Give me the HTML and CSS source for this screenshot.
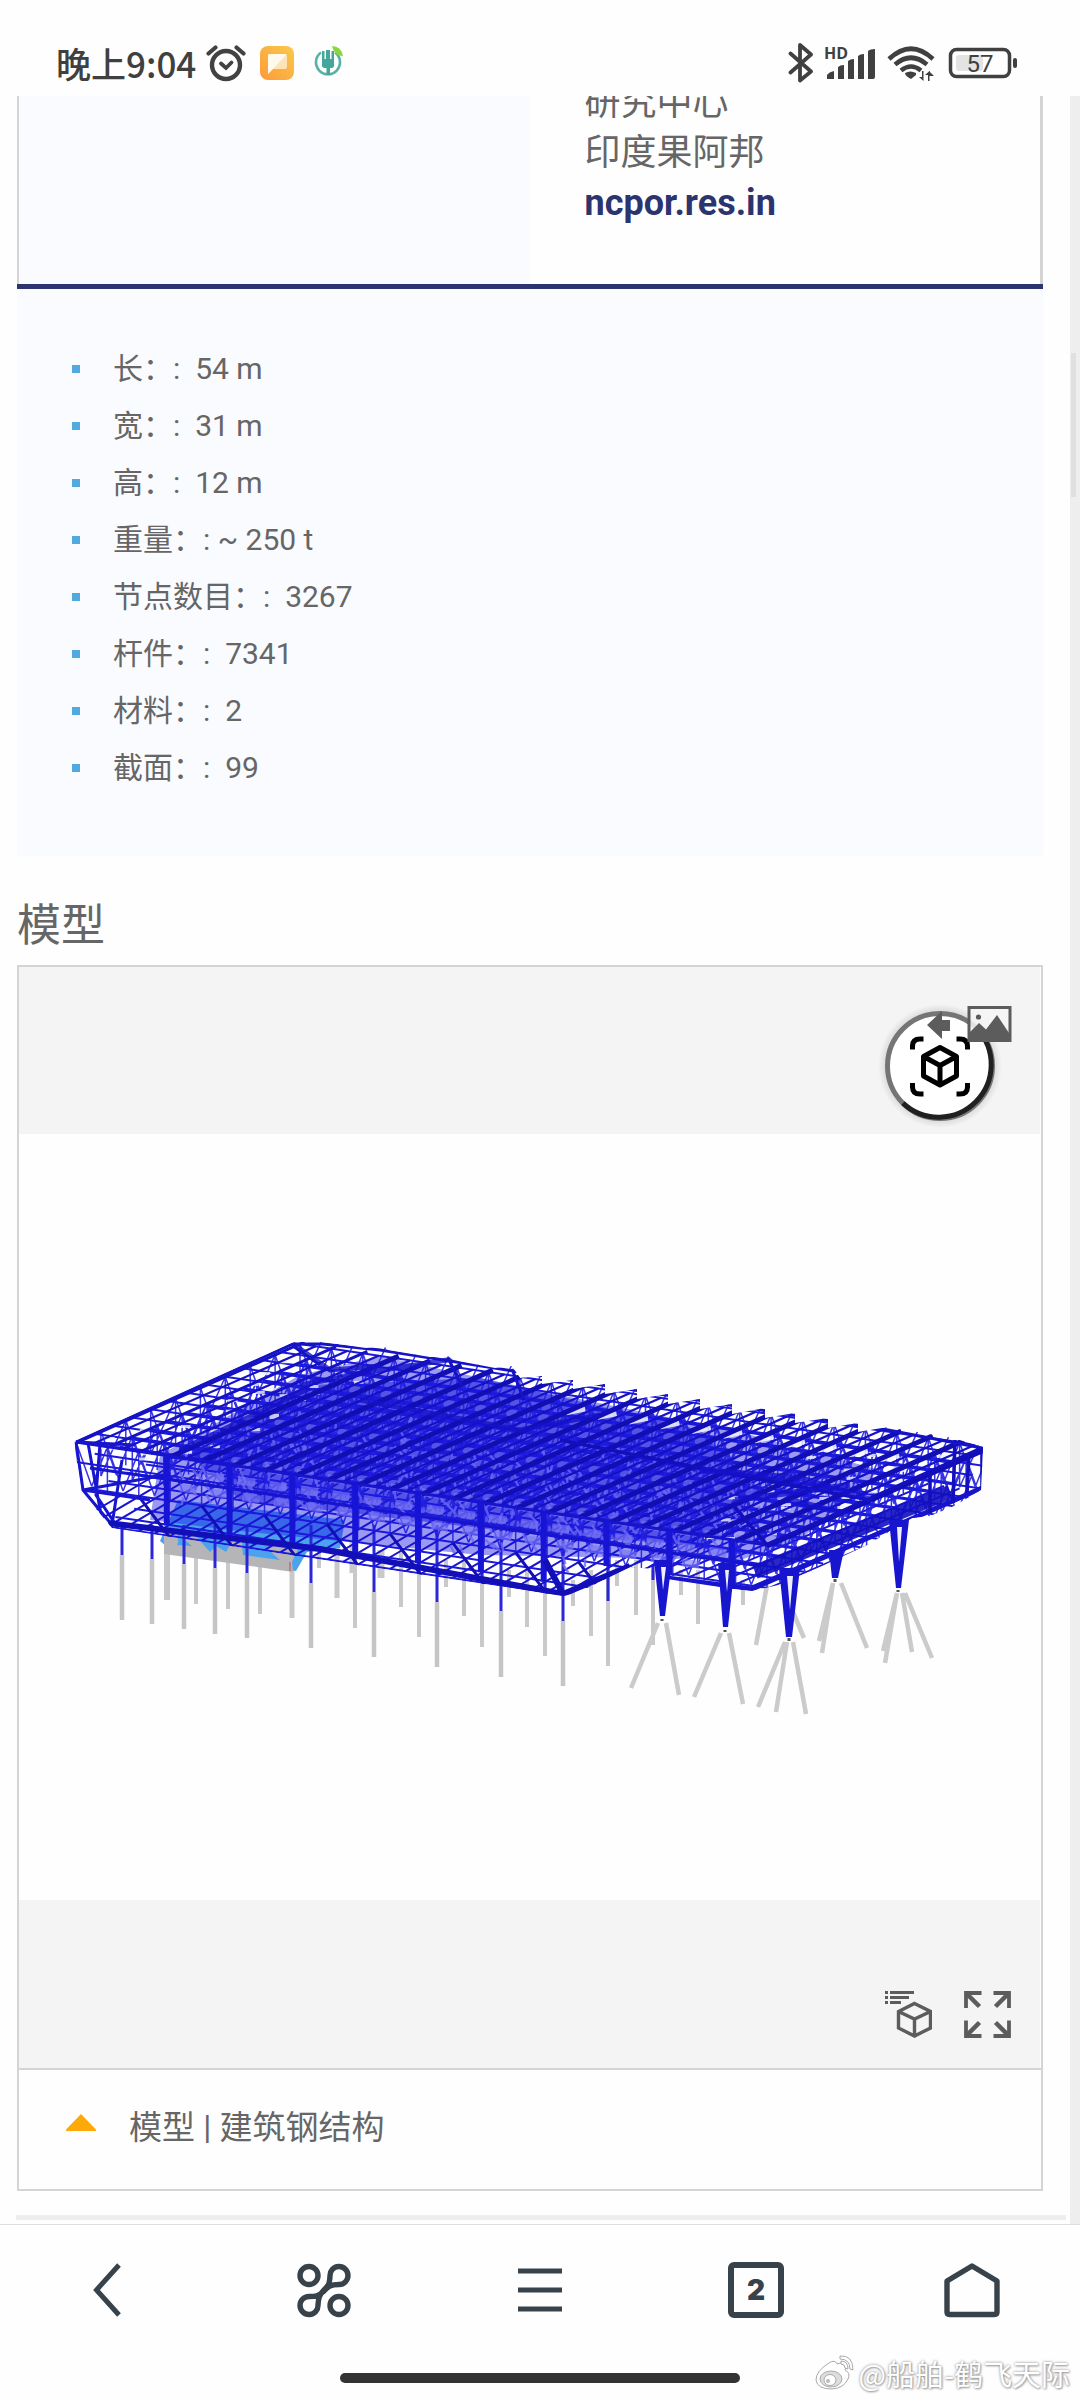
FILE: index.html
```html
<!DOCTYPE html>
<html lang="zh-CN">
<head>
<meta charset="utf-8">
<meta name="viewport" content="width=device-width, initial-scale=1">
<title>模型 | 建筑钢结构</title>
<link rel="stylesheet" href="styles.css">
</head>
<body>
<header class="status">
  <span class="status-time">晚上9:04</span>
  <svg class="status-alarm" viewBox="0 0 40 38" width="40" height="38" aria-hidden="true">
    <g fill="none" stroke="#424242" stroke-linecap="round">
      <circle cx="20" cy="21" r="14" stroke-width="4.4"/>
      <path d="M2.5 9.5 9.5 3.5M30.500 3.500 37.500 9.500" stroke-width="4.200"/>
      <path d="M15 19.500 20 24 25.500 18.500" stroke-width="3.800"/>
    </g>
  </svg>
  <svg class="status-chat" viewBox="0 0 34 34" width="34" height="34" aria-hidden="true">
    <defs><linearGradient id="amber" x1="1" y1="0" x2="0" y2="1"><stop offset="0" stop-color="#fbc94c"/><stop offset="1" stop-color="#fb9a3a"/></linearGradient></defs>
    <rect width="34" height="34" rx="8" fill="url(#amber)"/>
    <path d="M8 9.500Q8 8 9.500 8H25q2 0 2 2V21q0 2-2 2H13L8 28Z" fill="#fde3b6"/>
    <path d="M8 9.500Q8 8 9.500 8H25q1 0 1.500.8L8 28Z" fill="#fff8ec"/>
  </svg>
  <svg class="status-leaf" viewBox="0 0 32 34" width="32" height="34" aria-hidden="true">
    <path d="M9 6.500A12 12 0 1 0 23 6.500" fill="none" stroke="#55b3a6" stroke-width="2.600"/>
    <path d="M10 5h2.500v8h1.500V4h4v9h1.500V5h2.500v15q0 2-4 2v7h-3.500v-7q-4.500 0-4.500-2Z" fill="#45a79c"/>
    <path d="M20 0q9 0 11 10-9 0-11-10Z" fill="#8bd63f"/>
  </svg>
  <span class="spacer"></span>
  <svg class="status-system" viewBox="788 40 230 46" width="230" height="46" role="img" aria-label="蓝牙、信号、无线网络、电量">
    <g fill="none" stroke="#404040" stroke-width="3.800" stroke-linejoin="round" stroke-linecap="round">
      <path d="M790.500 53.500 811 71.500 800 80.500V45L811 54.500 790.500 72.500"/>
    </g>
    <g fill="#404040">
      <path d="M827 79V75q2-3 7-4v8ZM838 79V67q2-2 6-2v14ZM848 79V61q2-2 6-2v20ZM858 79V56q2-2 6-2v25ZM868 79V51q2-2 7-2v28q0 2-2 2Z"/>
      <text x="824" y="59" class="hd-text">HD</text>
      <path d="M905 73Q910.500 70 916 73V75L911 79Q905 76 905 73Z"/>
      <path d="M922 71v6h-3l4.500 4v-10ZM928 81v-6h-3l4.500-4v10ZM929 71l5 5h-5Z"/>
    </g>
    <g fill="none" stroke="#404040" stroke-width="4.600">
      <path d="M889 59Q911 38.500 933 59M895 64.500Q911 51 927 64.500M901 70.500Q911 62.500 921 70.500"/>
    </g>
    <rect x="956" y="55" width="27" height="16" rx="3" fill="#e3e3e3"/>
    <rect x="950.500" y="49.500" width="59" height="27" rx="6" fill="none" stroke="#404040" stroke-width="3.500"/>
    <rect x="1013" y="58" width="4" height="10" rx="2" fill="#404040"/>
    <text x="980" y="71.500" class="battery-text" text-anchor="middle">57</text>
  </svg>
</header>

<div class="viewport">
  <main class="page">
    <section class="partner">
      <div class="partner-logo"></div>
      <address class="partner-text">研究中心<br>印度果阿邦<br><a href="#">ncpor.res.in</a></address>
    </section>
    <ul class="facts">
      <li>长：:&nbsp; 54 m</li>
      <li>宽：:&nbsp; 31 m</li>
      <li>高：:&nbsp; 12 m</li>
      <li>重量：: ~ 250 t</li>
      <li>节点数目：:&nbsp; 3267</li>
      <li>杆件：:&nbsp; 7341</li>
      <li>材料：:&nbsp; 2</li>
      <li>截面：:&nbsp; 99</li>
    </ul>
    <h2 class="title">模型</h2>
    <section class="model">
      <div class="model-band model-band-top"></div>
      <svg id="structure" class="model-view" viewBox="19 1134 1022 766" role="img" aria-label="钢结构模型"></svg>
      <div class="model-band model-tools">
        <button type="button" aria-label="模型结构">
          <svg viewBox="0 0 47 47" width="47" height="47"><path d="M0 0h3v3H0ZM5 0h24v3H5ZM0 5h3v3H0ZM5 5h19v3H5ZM0 10h3v3H0ZM5 10h11v3H5Z" fill="#5c5c5c"/><path d="M29.500 12.500 45.500 20.500V37L29.500 45 13.500 37V20.500ZM13.500 20.500 29.500 28 45.500 20.500M29.500 28V45" fill="none" stroke="#5c5c5c" stroke-width="3.400"/></svg>
        </button>
        <button type="button" aria-label="全屏">
          <svg viewBox="0 0 47 47" width="47" height="47"><g fill="none" stroke="#5c5c5c" stroke-width="3.800"><path d="M17.500 2H2V17M29.500 2H45V17M2 29.500V45H17.500M45 29.500V45H29.500"/><path d="M2 2 15.500 15.500M45 2 31.500 15.500M2 45 15.500 31.500M45 45 31.500 31.500" stroke-width="4.500"/></g></svg>
        </button>
      </div>
      <div class="model-switch">
        <button class="ar-button" type="button" aria-label="增强现实">
          <svg viewBox="-62 -62 124 124" width="124" height="124">
            <circle r="52.500" fill="#fff" stroke="#757575" stroke-width="5"/>
            <path d="M-37.100 37.100A52.500 52.500 0 0 0 37.100-37.100" fill="none" stroke="#202020" stroke-width="5"/>
            <g fill="none" stroke="#000" stroke-width="5" stroke-linejoin="round">
              <path d="M-16.500-27H-20Q-27.500-27-27.500-20V-16.500M16.500-27H20Q27.500-27 27.500-20V-16.500M-16.500 28H-20Q-27.500 28-27.500 21V17M16.500 28H20Q27.500 28 27.500 21V17"/>
              <path d="M0-18.500 16.500-9.500V10L0 19-16.500 10V-9.500ZM-16.500-9.500 0-.5 16.500-9.500M0-.5V19"/>
            </g>
          </svg>
        </button>
        <button class="image-button" type="button" aria-label="返回图片">
          <svg viewBox="0 0 86 38" width="86" height="38"><path d="M1 19 16 5V14H24V25H16V33Z" fill="#5c5c5c"/><rect x="43" y="1.500" width="41" height="33" fill="#f4f4f4" fill-opacity=".85" stroke="#5c5c5c" stroke-width="3"/><circle cx="52.500" cy="11" r="2.600" fill="#5c5c5c"/><path d="M43 27 53 17 60 23.500 71 9 85 30V36H43Z" fill="#5c5c5c"/></svg>
        </button>
      </div>
      <button class="caption" type="button">
        <svg viewBox="0 0 30 17" width="30" height="17" aria-hidden="true"><path d="M15 0 30 15.500V17H0V15.500Z" fill="#fda90a"/></svg>
        <span>模型 | 建筑钢结构</span>
      </button>
    </section>
    <hr class="divider">
  </main>
  <div class="scroll-track"><div class="scroll-thumb"></div></div>
</div>

<nav class="browser-bar">
  <div class="browser-buttons">
    <button type="button" aria-label="后退"><svg viewBox="0 0 56 56" width="56" height="56"><path d="M39 3 16.500 28 39 53" fill="none" stroke="#37424a" stroke-width="5"/></svg></button>
    <button type="button" aria-label="应用"><svg viewBox="0 0 56 56" width="56" height="56"><g fill="none" stroke="#37424a" stroke-width="5.400"><circle cx="13" cy="13.500" r="9"/><circle cx="43" cy="43.500" r="9"/><path d="M34 14A9 9 0 1 1 43 22.500C35 22.500 32 24 27 30 22 34 20 34.500 13 34.500A9 9 0 1 0 22 43C22.500 36 23 33 28 28 33 23 33.500 22 34 14Z"/></g></svg></button>
    <button type="button" aria-label="菜单"><svg viewBox="0 0 56 56" width="56" height="56"><path d="M6 9H50M6 28H50M6 47H50" stroke="#37424a" stroke-width="5.200"/></svg></button>
    <button class="tabs" type="button" aria-label="标签页">2</button>
    <button type="button" aria-label="主页"><svg viewBox="0 0 56 56" width="56" height="56"><path d="M28 4 53 19V50Q53 52.500 50.500 52.500H5.500Q3 52.500 3 50V19Z" fill="none" stroke="#37424a" stroke-width="5.400" stroke-linejoin="round"/></svg></button>
  </div>
  <div class="home-pill"></div>
  <div class="watermark">
    <svg viewBox="0 0 40 38" width="40" height="38" aria-hidden="true"><g fill="#fff" stroke="#aaa" stroke-width="1"><path d="M14 9q6-4 8 1 8-3 9 2 0 2-1 4 6 3 3 9-4 9-16 10Q2 35 1 26 1 17 14 9Z"/><ellipse cx="16" cy="25" rx="11" ry="8" fill="#ddd"/><ellipse cx="15" cy="26" rx="6" ry="5.500"/><path d="M25 2q13-1 13 14l-3-1Q35 5 25 5ZM26 7q7 0 7 8l-3-1q0-4-4-4Z"/></g><circle cx="13" cy="27" r="2" fill="#bbb"/></svg>
    <span>@船舶-鹤飞天际</span>
  </div>
</nav>
<script src="structure.js"></script>
</body>
</html>
```
FILE: styles.css
```css
* { box-sizing: border-box; }

body {
  margin: 0;
  min-height: 100vh;
  display: flex;
  flex-direction: column;
  background: #fefefe;
  color: #666;
  font-family: Roboto, "Noto Sans CJK SC", sans-serif;
}

button {
  margin: 0;
  padding: 0;
  border: 0;
  background: none;
  color: inherit;
  font: inherit;
  cursor: pointer;
}

svg { display: block; }

/* Phone status bar */
.status {
  display: flex;
  align-items: center;
  height: 96px;
  padding: 30px 62px 0 56px;
}
.status-time {
  font: 500 35px/40px "Noto Sans CJK SC", sans-serif;
  color: #404040;
}
.status-alarm { margin-left: 10px; }
.status-chat { margin-left: 14px; }
.status-leaf { margin-left: 18px; }
.spacer { flex: 1; }
.hd-text { font: 700 16px "Open Sans", sans-serif; }
.battery-text { font: 400 24px Roboto, sans-serif; fill: #404040; }

/* Scrolled web page */
.viewport {
  flex: 1;
  display: flex;
  border-bottom: 1px solid #ddd;
}
.page {
  flex: 1;
  min-width: 0;
  padding: 0 27px 4px 17px;
}
.scroll-track {
  width: 10px;
  padding-top: 257px;
  background: #eee;
}
.scroll-thumb {
  width: 5px;
  height: 144px;
  margin-left: 1px;
  background: #e0e0e0;
}

.partner {
  display: grid;
  grid-template: 188px / 1fr 1fr;
  align-items: end;
  overflow: hidden;
  border: solid #d4d4d4;
  border-width: 0 3px 0 2px;
}
.partner-logo {
  height: 100%;
  background: #fafbff;
}
.partner-text {
  padding: 0 0 56px 55px;
  font-size: 36px;
  line-height: 50px;
  font-style: normal;
}
.partner-text a {
  color: #2c3470;
  font-weight: 700;
  text-decoration: none;
}

.facts {
  margin: 0;
  padding: 51px 55px 60px;
  border-top: 5px solid #2c3470;
  background: #fafbff;
  list-style: none;
  font-size: 30px;
  line-height: 57px;
}
.facts li {
  display: flex;
  align-items: center;
  gap: 33px;
  white-space: pre;
}
.facts li::before {
  content: "";
  width: 8px;
  height: 8px;
  background: #51a9df;
}

.title {
  margin: 38px 0 7px;
  font-size: 44px;
  font-weight: 400;
  line-height: 64px;
}

/* 3D model card */
.model {
  position: relative;
  border: 2px solid #d4d4d4;
}
.model-band {
  margin-right: 1px;
  background: #f4f4f4;
}
.model-band-top { height: 167px; }
.model-view {
  width: 100%;
  height: auto;
}
.model-tools {
  display: flex;
  justify-content: flex-end;
  gap: 32px;
  padding: 91px 29px 30px;
}
.model-switch {
  position: absolute;
  top: 37px;
  right: 29px;
  width: 134px;
  height: 124px;
}
.ar-button {
  position: absolute;
  top: 0;
  left: 0;
}
.ar-button svg {
  border-radius: 50%;
  background: radial-gradient(circle, #0002 52px, #0000 62px);
}
.image-button {
  position: absolute;
  top: 2px;
  right: 0;
}
.caption {
  display: flex;
  align-items: center;
  gap: 33px;
  width: 100%;
  padding: 34px 47px 37px;
  border-top: 2px solid #d4d4d4;
  font-size: 33px;
  line-height: 48px;
}
.caption svg { margin-bottom: 12px; }

.divider {
  height: 5px;
  margin: 24px -23px 0 -1px;
  border: 0;
  background: #eee;
}

/* Browser bar */
.browser-bar { position: relative; }
.browser-buttons {
  display: grid;
  grid-template-columns: repeat(5, 1fr);
  justify-items: center;
  padding: 37px 0 55px;
}
.tabs {
  width: 56px;
  height: 56px;
  border: 6px solid #37424a;
  border-radius: 6px;
  color: #37424a;
  font: 900 28px/44px Inter, sans-serif;
}
.home-pill {
  width: 37%;
  height: 10px;
  margin: 0 auto 17px;
  border-radius: 5px;
  background: #333;
}
.watermark {
  position: absolute;
  right: 10px;
  bottom: 8px;
  display: flex;
  align-items: center;
  gap: 4px;
  color: #fff;
  font: 400 29px/36px "Noto Sans CJK SC", sans-serif;
  text-shadow: 0 0 3px #888, 1px 1px 2px #aaa;
}
```
FILE: structure.js
```js
// Draws the steel frame: piles, deck slab, then the space truss.
(function () {
  var NS = 'http://www.w3.org/2000/svg';
  var svg = document.getElementById('structure');

  function add(parent, tag, attrs) {
    var el = document.createElementNS(NS, tag);
    for (var k in attrs) el.setAttribute(k, attrs[k]);
    parent.appendChild(el);
    return el;
  }
  function path(parent, d, color, width, opacity) {
    add(parent, 'path', { d: d, fill: 'none', stroke: color, 'stroke-width': width, 'stroke-opacity': opacity || 1 });
  }

  // Rear and middle rows of piles: x, bottom, top, width
  [[167, 1600, 1550, 6], [196, 1604, 1550, 4], [228, 1609, 1550, 4], [260, 1614, 1550, 4], [292, 1618, 1550, 5],
   [319, 1568, 1540, 4], [337, 1598, 1540, 5], [352, 1573, 1540, 5], [381, 1578, 1550, 7], [401, 1607, 1550, 4],
   [446, 1587, 1560, 4], [464, 1616, 1560, 4], [509, 1597, 1570, 4], [527, 1627, 1570, 4], [573, 1606, 1580, 4],
   [591, 1636, 1570, 4], [617, 1586, 1560, 4], [636, 1615, 1560, 4], [681, 1595, 1570, 4], [698, 1624, 1570, 4],
   [743, 1605, 1580, 4], [355, 1628, 1550, 4], [419, 1637, 1550, 4], [482, 1647, 1560, 4], [545, 1656, 1580, 4],
   [608, 1666, 1560, 4], [653, 1645, 1570, 4]].forEach(function (p) {
    path(svg, 'M' + p[0] + ' ' + p[2] + 'V' + p[1], '#c9c9c9', p[3]);
  });

  // Raked legs
  path(svg, 'M658 1623 631 1688M666 1623 679 1695M721 1633 694 1697M729 1633 743 1704M785 1642 758 1707M787 1642 776 1712' +
    'M793 1642 806 1714M833 1583 819 1641M833 1583 822 1653M841 1583 867 1648M897 1593 883 1651M897 1593 885 1663' +
    'M902 1593 912 1652M905 1593 932 1658M767 1585 756 1645M793 1612 804 1638', '#cbcbcb', 4.5);

  // Deck slab
  add(svg, 'path', { d: 'M160 1541 178 1500 345 1520 340 1548 307 1552 296 1571 166 1546Z', fill: '#4ba3ef' });
  add(svg, 'path', { d: 'M164 1528 176 1528 179 1545 190 1530 210 1552 232 1530 260 1552 278 1542 300 1545 292 1562 293 1572 164 1554Z', fill: '#b5b5b7' });
  add(svg, 'path', { d: 'M180 1536 192 1546 177 1545ZM203 1538 236 1534 226 1552ZM242 1542 262 1544 280 1560 243 1555Z', fill: '#4ba3ef' });
  path(svg, 'M290 1562V1571', '#c04a4a', 1);

  // Front row of piles
  [[122, 1555, 1620], [152, 1559, 1624], [184, 1564, 1629], [215, 1568, 1634], [247, 1573, 1638], [311, 1583, 1648],
   [374, 1592, 1657], [437, 1602, 1667], [501, 1611, 1677], [563, 1621, 1686]].forEach(function (p) {
    path(svg, 'M' + p[0] + ' ' + p[1] + 'V' + p[2], '#c5c5c5', 4.5);
    path(svg, 'M' + p[0] + ' 1525V' + p[1], '#2a27d6', 3);
  });
  path(svg, 'M355 1550V1563M419 1560V1573M482 1570V1582M545 1580V1592M608 1560V1601M653 1565V1580', '#2a27d6', 3);

  // Truss outline used as clip
  var clip = add(add(svg, 'defs', {}), 'clipPath', { id: 'frame' });
  add(clip, 'path', { d: 'M74 1441 293 1342 323 1342 366 1348 384 1346 388 1350 430 1357 448 1356 453 1360 495 1368 512 1366 520 1378 542 1376 542 1384 573 1380 573 1389' +
    ' 605 1384 605 1394 637 1389 637 1399 668 1394 668 1404 700 1399 700 1409 732 1404 732 1414 765 1408 765 1418' +
    ' 795 1413 795 1423 828 1418 828 1428 858 1423 858 1432 888 1427 953 1438 983 1447 981 1490 954 1506 930 1516' +
    ' 912 1518 867 1545 822 1566 778 1585 752 1591 733 1589 667 1579 667 1570 630 1567 577 1593 563 1596 112 1528 81 1491Z' });
  var g = add(svg, 'g', { 'clip-path': 'url(#frame)' });

  var seed = 7;
  function rnd() { seed = (seed * 16807) % 2147483647; return seed / 2147483647; }
  function pt(u, v, w) {
    return (76 + 691 * u + 224 * v).toFixed(1) + ' ' + (1442 + 103 * u - 98 * v + w).toFixed(1);
  }
  function seg(u1, v1, w1, u2, v2, w2) { return 'M' + pt(u1, v1, w1) + 'L' + pt(u2, v2, w2); }

  // Dense core seen through many layers of members
  add(g, 'path', { d: 'M160 1455 300 1375 380 1356 560 1395 740 1432 880 1470 800 1540 740 1560 480 1555 230 1530 150 1520Z', fill: '#2320e2', 'fill-opacity': .45 });
  add(g, 'path', { d: 'M190 1455 310 1385 480 1378 700 1430 760 1490 700 1545 540 1535 240 1500Z', fill: '#1c19dc', 'fill-opacity': .55 });

  var i, j, d, N = 22;
  // Lower chords and transverse lines
  d = '';
  for (i = 0; i <= N * 2; i++) d += seg(i / N / 2, 0, i > 34 ? 44 : 80, i / N / 2, 1, 46);
  path(g, d, '#1815d0', 2);
  d = '';
  for (j = 0; j <= 12; j++) {
    d += seg(0, j / 12, 0, 1, j / 12, 0) + seg(0, j / 12, 20, 1, j / 12, 20) + seg(0.02, j / 12, 45, 1, j / 12, 43);
    if (j < 3) d += seg(0.03, j / 12, 80, 0.75, j / 12, 80);
  }
  path(g, d, '#1b18dc', 2);

  // Web members
  d = '';
  for (i = 0; i <= N; i++) {
    for (j = 0; j <= 9; j++) {
      var u = i / N, v = j / 9;
      d += seg(u, v, 0, u, v, 45) + seg(u, v, 0, u + 0.5 / N, v, 42) + seg(u + 0.5 / N, v, 42, u + 1 / N, v, 0);
      if (j % 2) d += seg(u, v, 45, u, v + 1 / 9, 0);
    }
  }
  path(g, d, '#211ee0', 1.5, .9);

  // Short light stiffeners inside the core
  d = '';
  for (i = 0; i < 260; i++) {
    var a = 0.1 + rnd() * 0.72, b = rnd() * 0.75, w = 15 + rnd() * 40;
    d += seg(a, b, w, a + (rnd() - 0.5) * 0.02, b + 0.01, w + 9);
  }
  path(g, d, '#6d68f2', 2.4, .8);
  // Light web panels along the front bays
  d = '';
  for (i = 3; i < 20; i++) {
    for (j = 0; j < 3; j++) d += seg((i + .3) / N, j * .12, 30, (i + .85) / N, j * .12, 30);
  }
  path(g, d, '#7a76f4', 8, .65);
  // Openings at both ends of the frame
  d = '';
  for (i = 0; i < 60; i++) {
    var q = rnd() > 0.45 ? rnd() * 0.16 : 0.8 + rnd() * 0.18, r = rnd() * 0.94;
    d += seg(q, r, 8, q + 0.01, r + 0.012, 8);
  }
  path(g, d, '#f4f4ff', 3, .8);
  d = '';
  for (i = 9; i < 20; i++) d += seg((i + .4) / N, 0.87, 12, (i + .65) / N, 0.92, 12);
  path(g, d, '#f4f4ff', 5, .85);

  // Roof beams: secondary, then main
  d = '';
  for (i = 0; i < N; i++) d += seg((i + .5) / N, 0, 0, (i + .5) / N, 1, 0);
  path(g, d, '#1512c4', 2.2);
  d = '';
  for (i = 3; i <= N; i++) d += seg(i / N, 0, 1, i / N, 1.02, 0);
  path(g, d, '#110eb4', 5);
  d = '';
  for (i = 0; i < 3; i++) d += seg(i / N, 0, 1, i / N, 1.02, 0);
  path(g, d, '#1512c4', 3);

  // Front face: posts and braces
  path(g, 'M76 1442 767 1545M90 1468 760 1566', '#1714cc', 3);
  d = '';
  for (i = 3; i <= 21; i += 2) d += seg(i / N - .005, 0, 0, i / N - .005, 0, i > 15 ? 45 : 70);
  path(g, d, '#1714d6', 6);
  d = '';
  for (i = 2; i <= 16; i += 2) d += seg(i / N, 0, 45, (i + 1) / N, 0, 82);
  path(g, d, '#120fb4', 3);
  path(g, 'M76 1442 83 1490 112 1525 122 1460M88 1443 102 1520M100 1443 96 1495 118 1528M76 1442 135 1445M83 1490 165 1475M83 1490 150 1500', '#1815cf', 3);
  path(g, 'M108 1523 320 1549 563 1594 630 1566M563 1594 545 1560', '#120fb8', 6);
  path(g, 'M667 1578 752 1589 982 1488', '#1714cc', 5);
  path(g, 'M755 1572 950 1492', '#120fc0', 14, .9);
  path(g, 'M767 1545 982 1448V1488M955 1440 953 1503M969 1453 967 1493M930 1470V1513M560 1440 700 1468 870 1500M733 1505 767 1545', '#130fbd', 3.6);
  path(g, 'M700 1470 800 1478 872 1500M735 1500 850 1485M790 1500 850 1515', '#1512cc', 6, .8);
  path(g, 'M293 1344 330 1370 380 1366M300 1385 370 1372 460 1358M180 1450 310 1388M360 1400 520 1430 600 1415', '#1512c8', 5, .8);
  path(g, 'M76 1442 293 1344 323 1344 380 1350 888 1430 982 1448M293 1346 320 1365M448 1358 462 1386M512 1369 524 1400', '#1613c4', 3);

  // Tapered columns
  add(svg, 'path', { d: 'M654 1560H672L665 1616H660ZM718 1563H735L728 1627H723ZM779 1568H800L792 1637H786ZM829 1550H844L838 1578H832ZM889 1520H909L901 1588H896Z', fill: '#1815cf' });
  add(svg, 'path', { d: 'M661 1567H666L663 1590ZM725 1570H729L727 1592ZM787 1576H793L790 1610ZM897 1527H902L899 1562Z', fill: '#eeeeff' });
  path(svg, 'M662 1619V1621M725 1630V1632M789 1638V1641M835 1579V1582M898 1590V1592', '#555', 3);
})();
```
